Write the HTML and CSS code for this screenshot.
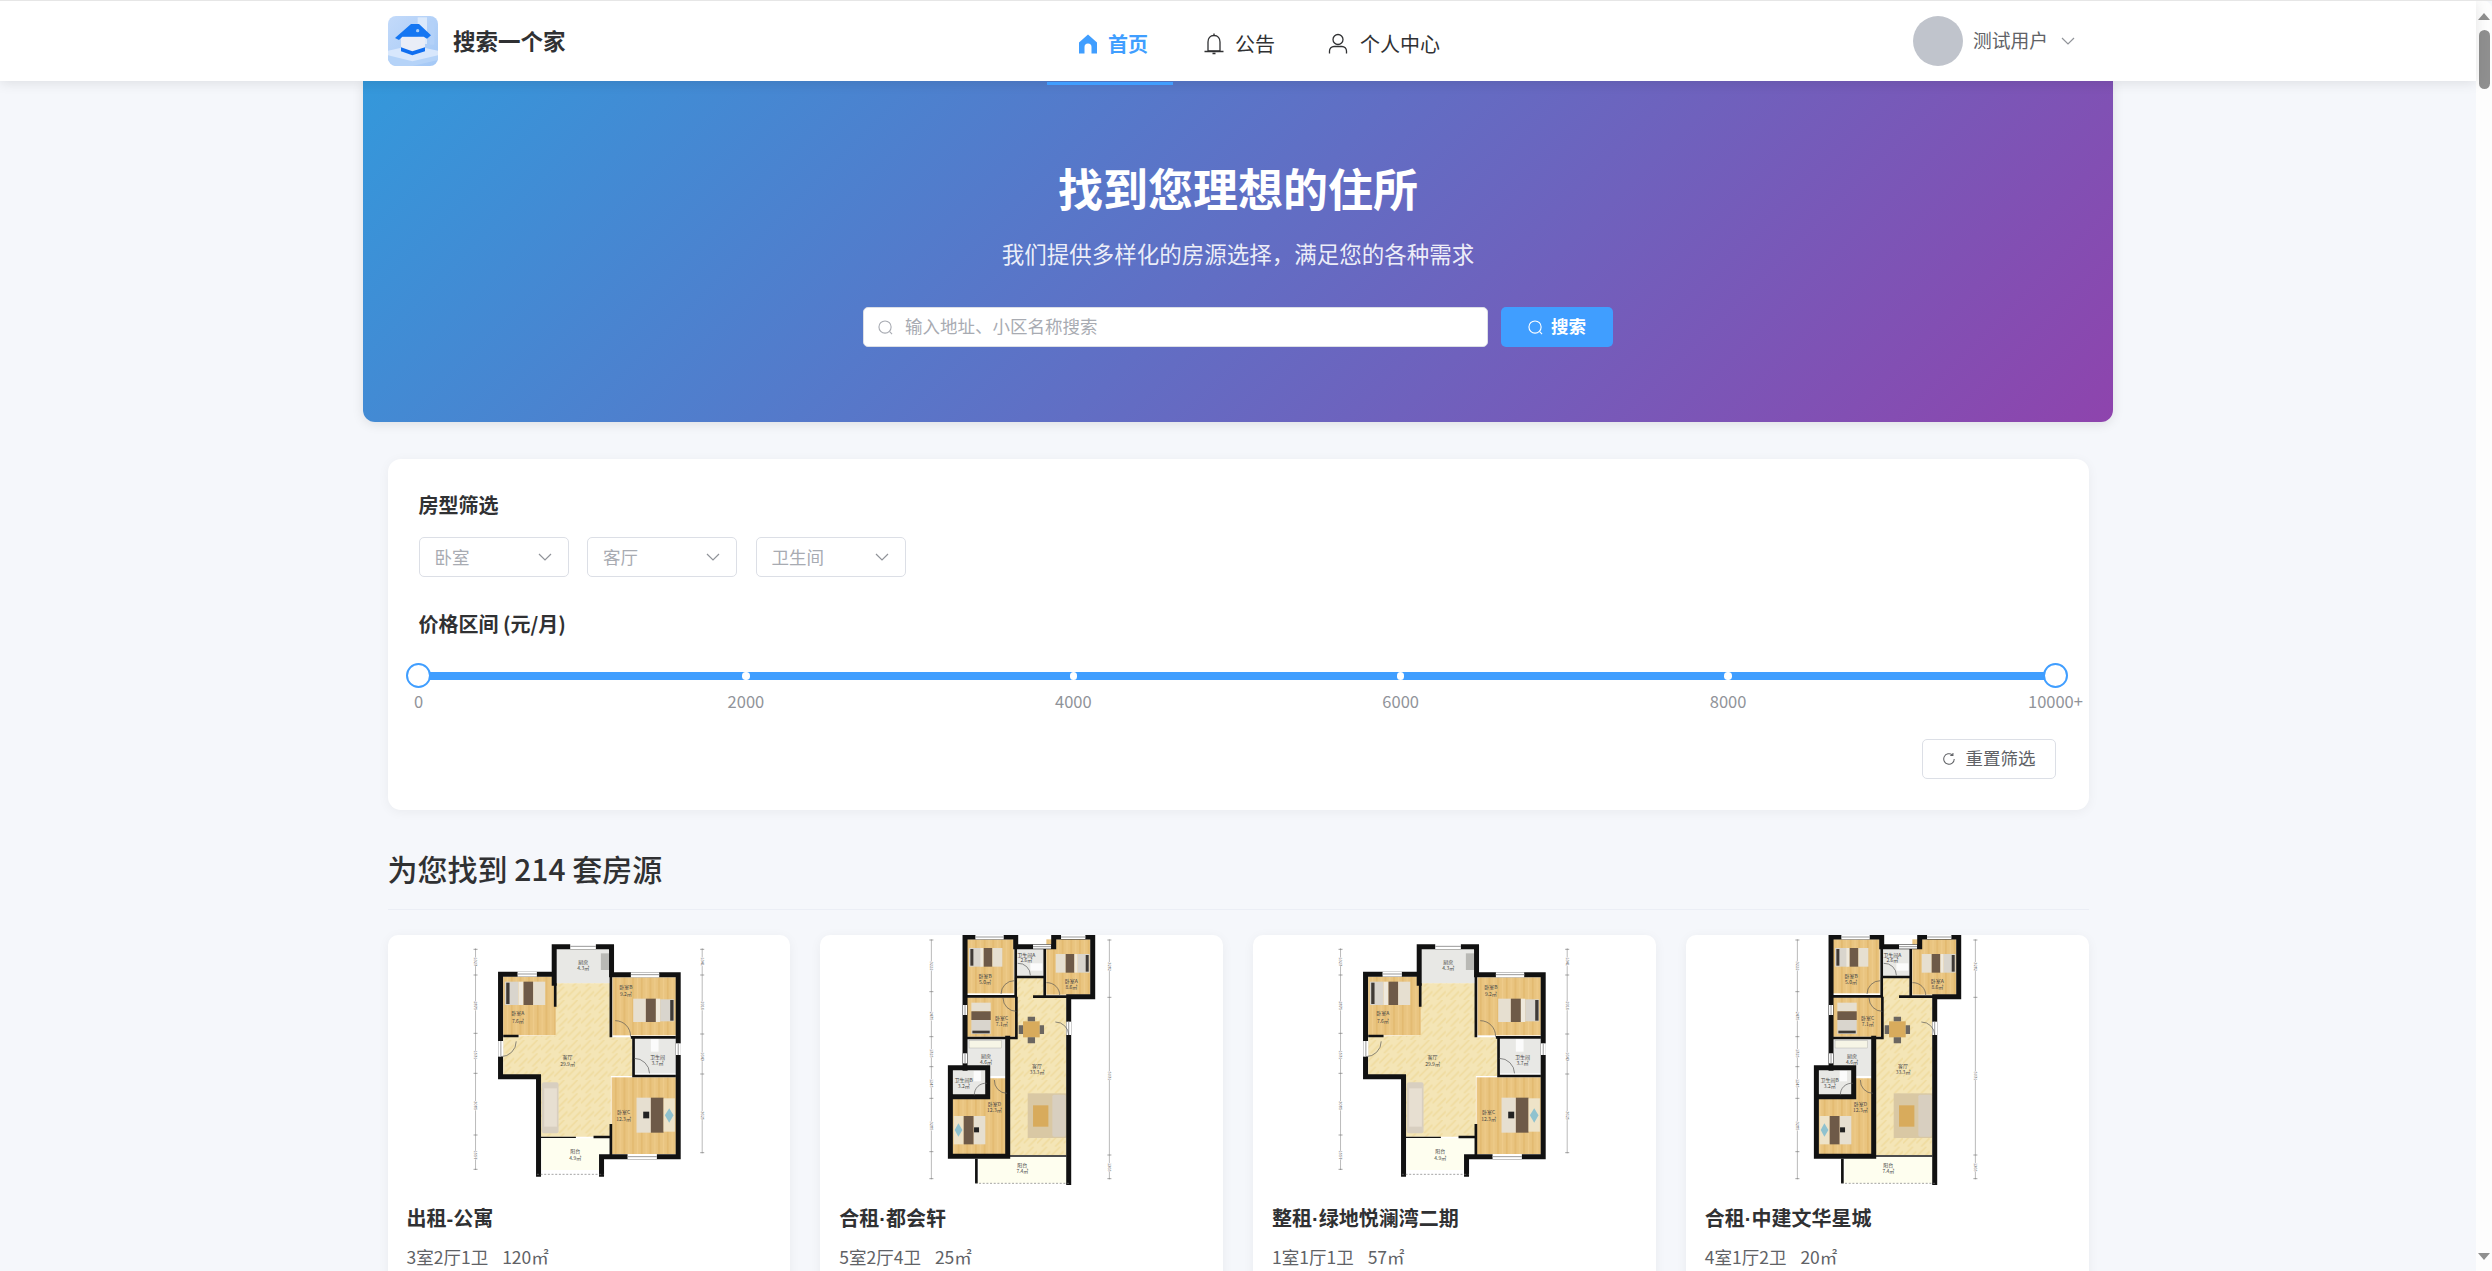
FILE: index.html
```html
<!DOCTYPE html>
<html lang="en">
<head>
    <meta charset="UTF-8">
    <meta name="viewport" content="width=device-width, initial-scale=1.0">
    <title>搜索一个家</title>
    <link rel="stylesheet" href="styles.css">
</head>
<body>
    <svg class="plan-defs" width="0" height="0">
        <defs>
            <pattern id="wood" width="26" height="40" patternUnits="userSpaceOnUse">
                <rect width="26" height="40" fill="#e9c47f"/>
                <rect x="0" width="5" height="40" fill="#e3ba70"/>
                <rect x="14" width="4" height="40" fill="#eecb8a"/>
            </pattern>
            <pattern id="tile" width="40" height="40" patternUnits="userSpaceOnUse">
                <rect width="40" height="40" fill="#f4e5b6"/>
                <path d="M0 30L30 0M14 40L40 14" stroke="#f0dca0" stroke-width="5"/>
            </pattern>

            <symbol id="plan-a" viewBox="24 285 1203 750">
                <rect x="527" y="327" width="158" height="103" fill="#e8e8e5"/>
                <rect x="367" y="410" width="158" height="176" fill="url(#wood)"/>
                <path d="M525 430H690V592H755V708H690V890H480V705H367V590L525 586Z" fill="url(#tile)"/>
                <rect x="695" y="412" width="190" height="174" fill="url(#wood)"/>
                <rect x="762" y="597" width="123" height="103" fill="#e8e8e5"/>
                <rect x="692" y="712" width="193" height="230" fill="url(#wood)"/>
                <path d="M482 895H688V942H655V990H482Z" fill="#fefeef"/>

                <rect x="372" y="425" width="41" height="70" fill="#d9d5cd"/>
                <rect x="376" y="428" width="10" height="64" fill="#3f3a36"/>
                <rect x="413" y="425" width="15" height="70" fill="#efe9dc"/>
                <rect x="428" y="425" width="29" height="70" fill="#6e5a48"/>
                <rect x="457" y="425" width="36" height="70" fill="#e6dfd0"/>
                <rect x="757" y="476" width="38" height="70" fill="#e6dfd0"/>
                <rect x="795" y="476" width="30" height="70" fill="#6e5a48"/>
                <rect x="825" y="476" width="13" height="70" fill="#efe9dc"/>
                <rect x="838" y="478" width="42" height="66" fill="#d9d5cd"/>
                <rect x="868" y="480" width="10" height="62" fill="#3f3a36"/>
                <rect x="767" y="773" width="43" height="105" fill="#e6dfd0"/>
                <rect x="787" y="815" width="18" height="20" fill="#222"/>
                <rect x="810" y="773" width="38" height="105" fill="#6e5a48"/>
                <rect x="848" y="775" width="34" height="100" fill="#eee3c8"/>
                <path d="M852 826L865 805L878 826L865 848Z" fill="#8fc2cf"/>
                <rect x="483" y="727" width="50" height="153" rx="6" fill="#d8cfc0"/>
                <rect x="490" y="745" width="38" height="115" fill="#e7dfd1"/>
                <rect x="660" y="340" width="25" height="50" fill="#b9b9b5"/>
                <rect x="810" y="597" width="23" height="38" fill="#fbfbfb"/>

                <path class="plan-wall" d="M520 430V320H692V404M692 404H892V950H662V1003M520 403H359V710H473V1003"/>
                <path class="plan-wall wall-thin" d="M690 404V592M758 592V708H885M750 592H885M367 588H413M690 852V945M638 891H690M523 430V500"/>
                <path class="plan-wall wall-hair" d="M480 892H585"/>

                <rect class="plan-window" x="568" y="312" width="77" height="15"/>
                <rect class="plan-window" x="750" y="397" width="85" height="15"/>
                <rect class="plan-window" x="410" y="395" width="58" height="15"/>
                <rect class="plan-window" x="740" y="942" width="88" height="15"/>
                <rect class="plan-window" x="885" y="610" width="15" height="35"/>
                <rect class="plan-window" x="352" y="603" width="15" height="47"/>
                <path d="M568 319H645M750 404H835M410 402H468M740 950H828M892 610V645M360 603V650" stroke="#999" stroke-width="3" fill="none"/>
                <path d="M360 650A46 46 0 0 0 406 604M703 542A46 46 0 0 1 749 590M806 700A46 46 0 0 0 760 655" stroke="#555" stroke-width="2" fill="none"/>
                <path d="M468 1003H668" stroke="#777" stroke-width="2" stroke-dasharray="6 5" fill="none"/>
                <path d="M284 325V990M964 325V940" stroke="#999" stroke-width="2" fill="none"/>
                <path d="M278 328H290M278 405H290M278 580H290M278 700H290M278 885H290M278 988H290M958 328H970M958 405H970M958 582H970M958 702H970M958 938H970" stroke="#777" stroke-width="2" fill="none"/>

                <g class="plan-dim">
                    <text transform="rotate(90 284 365)" x="284" y="369">1327</text>
                    <text transform="rotate(90 284 497)" x="284" y="501">2875</text>
                    <text transform="rotate(90 284 645)" x="284" y="649">1571</text>
                    <text transform="rotate(90 284 797)" x="284" y="801">3085</text>
                    <text transform="rotate(90 284 945)" x="284" y="949">1557</text>
                    <text transform="rotate(90 964 365)" x="964" y="369">1341</text>
                    <text transform="rotate(90 964 497)" x="964" y="501">2916</text>
                    <text transform="rotate(90 964 650)" x="964" y="654">1643</text>
                    <text transform="rotate(90 964 827)" x="964" y="831">3625</text>
                </g>
                <g class="plan-label">
                    <text x="607" y="371">厨房</text><text x="607" y="391">4.3㎡</text>
                    <text x="735" y="447">卧室B</text><text x="735" y="467">9.2㎡</text>
                    <text x="411" y="526">卧室A</text><text x="411" y="548">7.6㎡</text>
                    <text x="560" y="656">客厅</text><text x="560" y="677">29.9㎡</text>
                    <text x="830" y="656">卫生间</text><text x="830" y="676">3.7㎡</text>
                    <text x="728" y="823">卧室C</text><text x="728" y="843">12.3㎡</text>
                    <text x="583" y="939">阳台</text><text x="583" y="959">4.9㎡</text>
                </g>
            </symbol>

            <symbol id="plan-b" viewBox="30 45 1206 750">
                <rect x="470" y="58" width="140" height="162" fill="url(#wood)"/>
                <rect x="620" y="85" width="78" height="83" fill="#e8e8e5"/>
                <rect x="708" y="58" width="132" height="166" fill="url(#wood)"/>
                <path d="M612 172H700V230H768V705H597L590 355H618V230H612Z" fill="url(#tile)"/>
                <rect x="470" y="232" width="145" height="118" fill="url(#wood)"/>
                <path d="M472 358H588V468H535V445H472Z" fill="#e8e8e5"/>
                <rect x="426" y="450" width="102" height="75" fill="#e8e8e5"/>
                <path d="M426 532H535V475H590V703H426Z" fill="url(#wood)"/>
                <path d="M505 712H770V778L780 790H495L505 778Z" fill="#fefeef"/>

                <rect x="476" y="84" width="40" height="56" fill="#d9d5cd"/>
                <rect x="480" y="87" width="9" height="50" fill="#3f3a36"/>
                <rect x="510" y="84" width="10" height="56" fill="#efe9dc"/>
                <rect x="520" y="84" width="26" height="56" fill="#6e5a48"/>
                <rect x="546" y="84" width="30" height="56" fill="#e6dfd0"/>
                <rect x="736" y="102" width="30" height="56" fill="#e6dfd0"/>
                <rect x="766" y="102" width="26" height="56" fill="#6e5a48"/>
                <rect x="792" y="102" width="10" height="56" fill="#efe9dc"/>
                <rect x="802" y="102" width="36" height="56" fill="#d9d5cd"/>
                <rect x="826" y="105" width="9" height="50" fill="#3f3a36"/>
                <rect x="483" y="248" width="58" height="26" fill="#e6dfd0"/>
                <rect x="483" y="274" width="58" height="26" fill="#6e5a48"/>
                <rect x="483" y="300" width="58" height="42" fill="#d9d5cd"/>
                <rect x="486" y="332" width="52" height="8" fill="#3f3a36"/>
                <rect x="430" y="588" width="30" height="85" fill="#eee3c8"/>
                <path d="M433 630L444 610L456 630L444 650Z" fill="#8fc2cf"/>
                <rect x="460" y="588" width="30" height="85" fill="#6e5a48"/>
                <rect x="490" y="588" width="35" height="85" fill="#e6dfd0"/>
                <rect x="491" y="622" width="15" height="15" fill="#222"/>
                <rect x="652" y="520" width="116" height="134" fill="#d9c8a4"/>
                <rect x="668" y="556" width="46" height="64" fill="#d8ab5c"/>
                <rect x="726" y="524" width="40" height="126" rx="5" fill="#d8cfc0"/>
                <rect x="638" y="304" width="50" height="48" fill="#d8ab5c"/>
                <path d="M652 290h22v14h-22ZM652 352h22v18h-22ZM625 316h13v26h-13ZM688 316h13v26h-13Z" fill="#6b6660"/>
                <rect x="476" y="362" width="98" height="22" fill="#f6f5e6" stroke="#999" stroke-width="1"/>
                <rect x="660" y="130" width="36" height="22" fill="#fbfbfb"/>
                <rect x="490" y="452" width="22" height="32" fill="#fbfbfb"/>

                <path class="plan-wall" d="M464 45V445M464 51H616V80H730V51H847V230H775V790M420 709V443H532V530H420M420 709H592V355"/>
                <path class="plan-wall wall-thin" d="M464 354H618V230M464 229H618M616 80V230M703 80V230M616 171H703M668 230H775"/>
                <path class="plan-wall wall-thin" d="M498 716V790"/>
                <path class="plan-wall wall-hair" d="M548 708H768"/>

                <rect class="plan-window" x="495" y="45" width="85" height="13"/>
                <rect class="plan-window" x="752" y="45" width="73" height="12"/>
                <rect class="plan-window" x="668" y="74" width="54" height="12"/>
                <rect class="plan-window" x="768" y="305" width="14" height="40"/>
                <rect class="plan-window" x="458" y="255" width="12" height="30"/>
                <rect class="plan-window" x="458" y="400" width="12" height="30"/>
                <path d="M668 80H722M495 51H580M752 51H825M464 400V430M464 255V285M775 305V345" stroke="#999" stroke-width="3" fill="none"/>
                <path d="M612 182A40 40 0 0 0 572 222M708 188A38 38 0 0 1 748 228M578 234A40 40 0 0 0 618 274M735 306A40 40 0 0 1 775 345M552 480A38 38 0 0 0 590 520M492 526A34 34 0 0 1 530 490M622 130A36 36 0 0 1 660 166" stroke="#555" stroke-width="2" fill="none"/>
                <path d="M495 790H780" stroke="#777" stroke-width="2" stroke-dasharray="6 5" fill="none"/>
                <path d="M363 58V778M897 58V778" stroke="#999" stroke-width="2" fill="none"/>
                <path d="M357 60H369M357 215H369M357 350H369M357 440H369M357 535H369M357 695H369M357 776H369M891 60H903M891 232H903M891 705H903M891 776H903" stroke="#777" stroke-width="2" fill="none"/>

                <g class="plan-dim">
                    <text transform="rotate(90 363 138)" x="363" y="142">3222</text>
                    <text transform="rotate(90 363 288)" x="363" y="292">2475</text>
                    <text transform="rotate(90 363 400)" x="363" y="404">1725</text>
                    <text transform="rotate(90 363 490)" x="363" y="494">1245</text>
                    <text transform="rotate(90 363 618)" x="363" y="622">3285</text>
                    <text transform="rotate(90 897 140)" x="897" y="144">3282</text>
                    <text transform="rotate(90 897 468)" x="897" y="472">5071</text>
                    <text transform="rotate(90 897 742)" x="897" y="746">1365</text>
                </g>
                <g class="plan-label">
                    <text x="524" y="174">卧室B</text><text x="524" y="191">5.0㎡</text>
                    <text x="648" y="110">卫生间A</text><text x="648" y="127">2.6㎡</text>
                    <text x="783" y="189">卧室A</text><text x="783" y="206">8.6㎡</text>
                    <text x="574" y="301">卧室C</text><text x="574" y="317">7.1㎡</text>
                    <text x="527" y="414">厨房</text><text x="527" y="431">4.6㎡</text>
                    <text x="680" y="444">客厅</text><text x="680" y="461">33.3㎡</text>
                    <text x="460" y="486">卫生间B</text><text x="460" y="503">3.2㎡</text>
                    <text x="552" y="557">卧室D</text><text x="552" y="575">12.3㎡</text>
                    <text x="636" y="741">阳台</text><text x="636" y="758">7.4㎡</text>
                </g>
            </symbol>
        </defs>
    </svg>

    <div class="page">
        <header class="topbar">
            <div class="brand">
                <svg class="brand-logo" viewBox="39 18 150 150">
                    <defs>
                        <linearGradient id="logo-bg" x1="0" y1="0" x2="1" y2="1">
                            <stop offset="0" stop-color="#c3dafa"/>
                            <stop offset="1" stop-color="#a3c8f6"/>
                        </linearGradient>
                    </defs>
                    <rect x="39" y="18" width="150" height="150" rx="24" fill="url(#logo-bg)"/>
                    <rect x="128" y="22" width="28" height="80" fill="#dbe9fb"/>
                    <rect x="164" y="34" width="14" height="70" rx="3" fill="#b3d1f8"/>
                    <path d="M39 122L112 106L189 122V140L112 158L39 140Z" fill="#d8e7fc"/>
                    <path d="M39 136L112 154L189 136V150L112 168H60L39 150Z" fill="#b5d3f8"/>
                    <path d="M78 80H150V120L112 132L78 120Z" fill="#e9edf7"/>
                    <path d="M78 112L112 124L150 112V124L112 136L78 124Z" fill="#0f6ef0"/>
                    <path d="M60 84L108 42H132L168 76L156 86L146 80H82L72 90Z" fill="#1476f2"/>
                    <circle cx="128" cy="62" r="5" fill="#a9cdf8"/>
                </svg>
                <span class="brand-name">搜索一个家</span>
            </div>

            <nav class="menu">
                <a class="menu-item is-active">
                    <svg class="menu-icon" viewBox="0 0 24 24"><path d="M12 2.500L21 10.500V21.500H15.500V15A3.500 3.500 0 0 0 8.500 15V21.500H3V10.500Z" fill="currentColor"/></svg>
                    <span>首页</span>
                </a>
                <a class="menu-item menu-notice">
                    <svg class="menu-icon" viewBox="0 0 24 24" fill="none" stroke="currentColor" stroke-width="1.300"><path d="M12 3.500C8 3.500 6 6.500 6 10V19H18V10C18 6.500 16 3.500 12 3.500Z"/><path d="M2.500 19.500H21.500M12 1.500V3.500M10.500 21.500H13.500"/></svg>
                    <span>公告</span>
                </a>
                <a class="menu-item">
                    <svg class="menu-icon" viewBox="0 0 24 24" fill="none" stroke="currentColor" stroke-width="1.300"><circle cx="12" cy="7.500" r="5"/><path d="M3.500 21.500V19A4.500 4.500 0 0 1 8 14.500H16A4.500 4.500 0 0 1 20.500 19V21.500"/></svg>
                    <span>个人中心</span>
                </a>
            </nav>

            <div class="user">
                <div class="user-avatar"></div>
                <span class="user-name">测试用户</span>
                <svg class="chevron user-chevron" viewBox="0 0 14 8"><path d="M1 1L7 7L13 1"/></svg>
            </div>
        </header>

        <main class="content">
            <section class="hero">
                <h1 class="hero-title">找到您理想的住所</h1>
                <p class="hero-sub">我们提供多样化的房源选择，满足您的各种需求</p>
                <div class="search">
                    <div class="search-input">
                        <svg class="search-icon" viewBox="0 0 16 16"><circle cx="7.500" cy="7.500" r="6.500"/><path d="M12.500 12.500L15 15"/></svg>
                        <span>输入地址、小区名称搜索</span>
                    </div>
                    <button class="search-btn">
                        <svg class="search-icon" viewBox="0 0 16 16"><circle cx="7.500" cy="7.500" r="6.500"/><path d="M12.500 12.500L15 15"/></svg>
                        <span>搜索</span>
                    </button>
                </div>
            </section>

            <section class="filter">
                <h3 class="filter-title">房型筛选</h3>
                <div class="selects">
                    <div class="select"><span>卧室</span><svg class="chevron" viewBox="0 0 14 8"><path d="M1 1L7 7L13 1"/></svg></div>
                    <div class="select"><span>客厅</span><svg class="chevron" viewBox="0 0 14 8"><path d="M1 1L7 7L13 1"/></svg></div>
                    <div class="select"><span>卫生间</span><svg class="chevron" viewBox="0 0 14 8"><path d="M1 1L7 7L13 1"/></svg></div>
                </div>

                <h3 class="filter-title price-title">价格区间 (元/月)</h3>
                <div class="slider">
                    <div class="slider-track">
                        <i class="slider-stop"></i><i class="slider-stop"></i><i class="slider-stop"></i>
                        <i class="slider-stop"></i><i class="slider-stop"></i><i class="slider-stop"></i>
                        <i class="slider-handle handle-min"></i>
                        <i class="slider-handle handle-max"></i>
                    </div>
                    <div class="slider-marks">
                        <span class="mark"><b>0</b></span>
                        <span class="mark"><b>2000</b></span>
                        <span class="mark"><b>4000</b></span>
                        <span class="mark"><b>6000</b></span>
                        <span class="mark"><b>8000</b></span>
                        <span class="mark"><b>10000+</b></span>
                    </div>
                </div>
                <div class="filter-actions">
                    <button class="reset-btn">
                        <svg class="reset-icon" viewBox="0 0 16 16"><path d="M14 8A6 6 0 1 1 11.800 3.300M12.500 1V4H9.500"/></svg>
                        <span>重置筛选</span>
                    </button>
                </div>
            </section>

            <h2 class="result-title">为您找到 214 套房源</h2>

            <section class="house-grid">
                <article class="house-card">
                    <svg class="house-plan"><use href="#plan-a"/></svg>
                    <h4 class="house-name">出租-公寓</h4>
                    <p class="house-spec"><span>3室2厅1卫</span><span>120㎡</span></p>
                </article>
                <article class="house-card">
                    <svg class="house-plan"><use href="#plan-b"/></svg>
                    <h4 class="house-name">合租·都会轩</h4>
                    <p class="house-spec"><span>5室2厅4卫</span><span>25㎡</span></p>
                </article>
                <article class="house-card">
                    <svg class="house-plan"><use href="#plan-a"/></svg>
                    <h4 class="house-name">整租·绿地悦澜湾二期</h4>
                    <p class="house-spec"><span>1室1厅1卫</span><span>57㎡</span></p>
                </article>
                <article class="house-card">
                    <svg class="house-plan"><use href="#plan-b"/></svg>
                    <h4 class="house-name">合租·中建文华星城</h4>
                    <p class="house-spec"><span>4室1厅2卫</span><span>20㎡</span></p>
                </article>
            </section>
        </main>
    </div>

    <aside class="scrollbar">
        <i class="scroll-up"></i>
        <i class="scroll-thumb"></i>
        <i class="scroll-down"></i>
    </aside>
</body>
</html>
```

FILE: styles.css
```css
* {
    box-sizing: border-box;
}

html, body {
    margin: 0;
    height: 100%;
    overflow: hidden;
}

body {
    display: flex;
    background-color: #f5f7fb;
    font-family: "Noto Sans CJK SC", "Noto Sans", sans-serif;
    color: #303133;
    border-top: 1px solid #e6e6e6;
}

.plan-defs {
    flex: none;
}

.page {
    flex: 1;
    min-width: 0;
    height: 100%;
    display: flex;
    flex-direction: column;
}

/* top bar */
.topbar {
    flex: none;
    height: 80px;
    display: flex;
    align-items: center;
    padding: 0 401px 0 388px;
    background-color: #fff;
    box-shadow: 0 2px 12px rgba(0, 0, 0, 0.1);
    position: relative;
    z-index: 10;
}

.brand {
    display: flex;
    align-items: center;
    gap: 15px;
}

.brand-logo {
    width: 50px;
    height: 50px;
}

.brand-name {
    padding-bottom: 3px;
    font-size: 22.5px;
    font-weight: 700;
    color: #303133;
}

.menu {
    display: flex;
    height: 80px;
    margin-left: 481.5px;
    padding-top: 5px;
}

.menu-item {
    display: flex;
    align-items: center;
    gap: 10.5px;
    padding: 0 26px;
    font-size: 20px;
    color: #303133;
    position: relative;
}

.menu-notice {
    gap: 9px;
    padding-left: 29px;
    padding-right: 24.5px;
}

.menu-item.is-active {
    gap: 8px;
    padding-left: 29px;
    padding-right: 25px;
    color: #409eff;
    font-weight: 700;
}

.menu-item.is-active::after {
    content: "";
    position: absolute;
    left: 0;
    right: 0;
    bottom: -4px;
    height: 3px;
    background-color: #409eff;
}

.menu-icon {
    width: 24px;
    height: 24px;
}

.user {
    margin-left: auto;
    display: flex;
    align-items: center;
}

.user-avatar {
    width: 50px;
    height: 50px;
    border-radius: 50%;
    background-color: #c0c4cc;
}

.user-name {
    margin-left: 10px;
    padding-bottom: 3px;
    font-size: 18.75px;
    color: #606266;
}

.chevron {
    width: 14px;
    height: 8px;
    flex: none;
}

.chevron path {
    fill: none;
    stroke: #909399;
    stroke-width: 1.2;
}

.user-chevron {
    margin-left: 13px;
}

/* main column */
.content {
    width: 1701px;
    margin: 0 auto;
}

.hero {
    height: 341px;
    margin: 0 -24.5px;
    padding-top: 74.5px;
    display: flex;
    flex-direction: column;
    align-items: center;
    background: linear-gradient(135deg, #3498db, #8e44ad);
    border-radius: 0 0 12px 12px;
    box-shadow: 0 2px 12px rgba(0, 0, 0, 0.1);
    color: #fff;
}

.hero-title {
    margin: 0;
    font-size: 45px;
    line-height: 63px;
    font-weight: 700;
}

.hero-sub {
    margin: 18px 0 0;
    font-size: 22.5px;
    line-height: 32px;
    color: rgba(255, 255, 255, 0.9);
}

.search {
    display: flex;
    gap: 13px;
    margin-top: 38.5px;
}

.search-input {
    width: 625px;
    height: 40px;
    display: flex;
    align-items: center;
    gap: 12px;
    padding-left: 14px;
    background-color: #fff;
    border-radius: 5px;
    border: 1px solid #dcdfe6;
    font-size: 17.5px;
    color: #a8abb2;
}

.search-input span,
.search-btn span {
    padding-bottom: 3px;
}

.search-icon {
    width: 15px;
    height: 15px;
    flex: none;
    fill: none;
    stroke: currentColor;
    stroke-width: 1.2;
}

.search-btn {
    width: 112px;
    height: 40px;
    display: flex;
    align-items: center;
    justify-content: center;
    gap: 8px;
    padding: 0;
    border: none;
    border-radius: 5px;
    background-color: #409eff;
    color: #fff;
    font-family: inherit;
    font-size: 17.5px;
    font-weight: 700;
}

/* filters */
.filter {
    margin-top: 37px;
    height: 351px;
    padding: 32px 33px 31px 31px;
    background-color: #fff;
    border-radius: 13px;
    box-shadow: 0 2px 12px rgba(0, 0, 0, 0.05);
}

.filter-title {
    margin: 0;
    font-size: 20px;
    line-height: 28px;
    font-weight: 700;
    color: #303133;
}

.selects {
    display: flex;
    gap: 18.5px;
    margin-top: 18px;
}

.select {
    width: 150px;
    height: 40px;
    display: flex;
    align-items: center;
    justify-content: space-between;
    padding: 0 16px 0 15px;
    border: 1px solid #dcdfe6;
    border-radius: 5px;
    font-size: 17.5px;
    color: #a8abb2;
}

.select span {
    padding-bottom: 1px;
}

.price-title {
    margin-top: 33px;
}

.slider {
    margin-top: 34px;
}

.slider-track {
    height: 7.5px;
    display: flex;
    align-items: center;
    justify-content: space-between;
    background-color: #409eff;
    border-radius: 4px;
    position: relative;
}

.slider-stop {
    width: 7.5px;
    height: 7.5px;
    border-radius: 50%;
    background-color: #fff;
    margin: 0 -3.75px;
}

.slider-handle {
    width: 25px;
    height: 25px;
    border: 2.5px solid #409eff;
    border-radius: 50%;
    background-color: #fff;
    position: absolute;
    top: -8.75px;
}

.handle-min {
    left: -12.5px;
}

.handle-max {
    right: -12.5px;
}

.slider-marks {
    display: flex;
    justify-content: space-between;
    margin-top: 11px;
    height: 20px;
}

.mark {
    width: 0;
    display: flex;
    justify-content: center;
}

.mark b {
    flex: none;
    font-weight: 400;
    font-size: 16.5px;
    line-height: 20px;
    color: #909399;
}

.filter-actions {
    display: flex;
    justify-content: flex-end;
    margin-top: 28px;
}

.reset-btn {
    width: 134px;
    height: 40px;
    display: flex;
    align-items: center;
    justify-content: center;
    gap: 10px;
    padding: 0;
    border: 1px solid #dcdfe6;
    border-radius: 5px;
    background-color: #fff;
    color: #606266;
    font-family: inherit;
    font-size: 17.5px;
}

.reset-btn span {
    padding-bottom: 2px;
}

.reset-icon {
    width: 14px;
    height: 14px;
    fill: none;
    stroke: currentColor;
    stroke-width: 1.2;
}

/* results */
.result-title {
    margin: 38px 0 25px;
    padding-bottom: 21px;
    font-size: 30px;
    line-height: 40px;
    font-weight: 500;
    color: #303133;
    border-bottom: 1px solid #ebeef5;
}

.house-grid {
    display: grid;
    grid-template-columns: repeat(4, 1fr);
    gap: 30px;
}

.house-card {
    height: 420px;
    padding-bottom: 20px;
    background-color: #fff;
    border-radius: 10px;
    box-shadow: 0 2px 12px rgba(0, 0, 0, 0.05);
}

.house-plan {
    display: block;
    width: 100%;
    height: 250px;
}

.house-name {
    margin: 19.5px 19px 0;
    font-family: "Liberation Sans", "Noto Sans CJK SC", sans-serif;
    font-size: 20px;
    line-height: 28px;
    font-weight: 700;
    color: #303133;
}

.house-spec {
    display: flex;
    gap: 14px;
    margin: 12.5px 19px 0;
    font-size: 17.5px;
    line-height: 24px;
    color: #606266;
}

/* floor plan */
.plan-wall {
    fill: none;
    stroke: #111;
    stroke-width: 15;
    stroke-linecap: square;
}

.wall-thin {
    stroke-width: 8;
    stroke-linecap: butt;
}

.wall-hair {
    stroke-width: 4;
    stroke-linecap: butt;
}

.plan-window {
    fill: #fff;
}

.plan-label text {
    font-size: 15px;
    fill: #444;
    text-anchor: middle;
}

.plan-dim text {
    font-size: 12px;
    fill: #666;
    text-anchor: middle;
    stroke: #fff;
    stroke-width: 3px;
    paint-order: stroke;
}

/* page scrollbar */
.scrollbar {
    flex: none;
    width: 16px;
    height: 100%;
    display: flex;
    flex-direction: column;
    align-items: center;
    background-color: #fdfdfd;
    border-top-right-radius: 8px;
}

.scroll-up {
    margin-top: 12px;
    border: 6.5px solid transparent;
    border-top: none;
    border-bottom: 7px solid #8f8f8f;
}

.scroll-thumb {
    width: 11px;
    height: 59px;
    margin-top: 10px;
    border-radius: 5.5px;
    background-color: #8f8f8f;
}

.scroll-down {
    margin-top: auto;
    margin-bottom: 11px;
    border: 6.5px solid transparent;
    border-bottom: none;
    border-top: 7px solid #8f8f8f;
}
```
